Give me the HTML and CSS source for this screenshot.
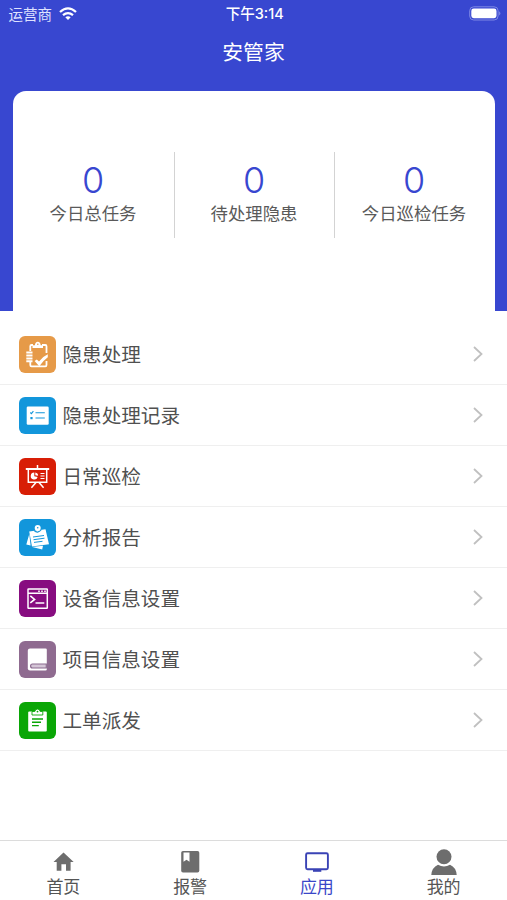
FILE: index.html
```html
<!DOCTYPE html>
<html lang="zh-CN">
<head>
<meta charset="utf-8">
<title>安管家</title>
<link rel="stylesheet" href="styles.css">
</head>
<body>
<div class="app">
  <header class="hero">
    <div class="status">
      <div class="carrier"><span>运营商</span>
        <svg class="wifi" width="18" height="13" viewBox="0 0 18 13" fill="none" stroke="#fff" stroke-width="2.3"><path d="M1 5Q9-2.200 17 5M4 8.200q5-4.200 10 0"/><path d="M6.300 10.300q2.700-2 5.400 0L9 13z" fill="#fff" stroke="none"/></svg>
      </div>
      <div class="time">下午3:14</div>
      <svg class="battery" width="32" height="15" viewBox="0 0 32 15"><rect x=".7" y=".8" width="28.4" height="13.2" rx="4" fill="none" stroke="#7e88e4" stroke-width="1"/><rect x="2.300" y="2.600" width="25.200" height="9.600" rx="2.400" fill="#fff"/><path d="M30.300 5.200q2 2.200 0 4.400z" fill="#929aeb"/></svg>
    </div>
    <h1 class="title">安管家</h1>
    <section class="card">
      <div class="stat"><b>0</b><span>今日总任务</span></div>
      <div class="stat"><b>0</b><span>待处理隐患</span></div>
      <div class="stat"><b>0</b><span>今日巡检任务</span></div>
    </section>
  </header>
  <main class="list">
    <a class="row">
      <svg class="icon orange" viewBox="0 0 37 37" fill="none" stroke="#fff" stroke-width="1.800"><path d="M14 9h-1.500q-1.200 0-1.200 1.300V15M11.300 26v3q0 1.300 1.200 1.300h13.800q1.200 0 1.200-1.300v-4M27.500 17v-6.700q0-1.300-1.200-1.300H23"/><path d="M13.500 12V9.300h2.400q.3-3.600 2.900-3.600t2.900 3.600h2.300V12z" fill="#fff" stroke="none"/><circle cx="18.800" cy="8.300" r=".8" fill="#e69a48" stroke="none"/><path d="M7.300 16.500h6.200M7.300 19.500h6.200M7.300 22.500h6.200M7.300 25.200h6.200" stroke-width="2"/><path d="M15.600 25l2.200-1.600 2.200 2.100q3.500-5 8.800-7.300v3.100q-5 3.700-8.500 8.900z" fill="#fff" stroke="none"/></svg>
      <span class="label">隐患处理</span><svg class="chevron" viewBox="0 0 10 16"><path d="M1 1l7.500 7L1 15"/></svg>
    </a>
    <a class="row">
      <svg class="icon blue" viewBox="0 0 37 37" fill="none" stroke="#1296db" stroke-width="1.100"><rect x="7.700" y="9.500" width="22" height="18.300" rx="1.300" fill="#fff" stroke="none"/><path d="M16.500 15.700h9.300M16.500 21h9.300M11.300 15.500l1.100 1.100 2-2.400"/><rect x="11.400" y="20" width="2.200" height="2.200" fill="#1296db" stroke="none"/></svg>
      <span class="label">隐患处理记录</span><svg class="chevron" viewBox="0 0 10 16"><path d="M1 1l7.500 7L1 15"/></svg>
    </a>
    <a class="row">
      <svg class="icon red" viewBox="0 0 37 37" fill="none" stroke="#fff" stroke-width="1.500"><path d="M6.800 11h23.400" stroke-width="2.200"/><path d="M18.500 7v4M9.300 12v12.200h18.400V12"/><path d="M17 24.500l-4.600 5.300M20 24.500l4.600 5.300"/><path d="M15.300 14.500a3.500 3.500 0 1 0 3.300 4.400l-3.300-.6z" fill="#fff" stroke="none"/><path d="M16.300 14.400a3.400 3.400 0 0 1 2.800 3.300l-2.800-.4z" fill="#fff" stroke="none"/><path d="M21.500 15.500h4M21.500 18h4M21.500 20.500h4" stroke-width="1.200"/></svg>
      <span class="label">日常巡检</span><svg class="chevron" viewBox="0 0 10 16"><path d="M1 1l7.500 7L1 15"/></svg>
    </a>
    <a class="row">
      <svg class="icon blue" viewBox="0 0 37 37" fill="none" stroke="#1296db"><path d="M10.300 15L7.300 25.500l4.300 1zM13.200 28l10.800-1.200-.8 3.800z" fill="#fff" stroke="none"/><path d="M10.200 12.500L26.500 10.300 30 25.200l-17 2.200z" fill="#fff" stroke="none"/><path d="M14 18l11-1.500M14.500 20.700l11-1.500M15 23.400l8.500-1.100"/><path d="M15.200 11.500q3.500 3.600 7-.8" stroke-width="1.200"/><circle cx="18.700" cy="8.900" r="3" fill="#fff" stroke="none"/><circle cx="18.700" cy="8.700" r=".8" fill="#1296db" stroke="none"/></svg>
      <span class="label">分析报告</span><svg class="chevron" viewBox="0 0 10 16"><path d="M1 1l7.500 7L1 15"/></svg>
    </a>
    <a class="row">
      <svg class="icon purple" viewBox="0 0 37 37" fill="none" stroke="#fff" stroke-width="1.500"><rect x="9" y="9" width="19.300" height="19.200" rx=".5"/><path d="M9 13.300h19.300"/><path d="M19.200 11.200h1.600M22.200 11.200h1.600M25.200 11.200h1.600" stroke-width="1.500"/><path d="M11.300 15.900l4.300 3.500-4.300 3.500M16.500 23h8.800" stroke-width="1.600"/></svg>
      <span class="label">设备信息设置</span><svg class="chevron" viewBox="0 0 10 16"><path d="M1 1l7.500 7L1 15"/></svg>
    </a>
    <a class="row">
      <svg class="icon mauve" viewBox="0 0 37 37"><path d="M11 7.500h15.500q1.300 0 1.300 1.300v19.400q0 1.300-1.300 1.300H11q-2.200 0-2.200-2.200V9.700q0-2.200 2.200-2.200z" fill="#fff"/><path d="M27.300 23H13.500q-1.900 0-1.900 2t1.900 2h13.800z" fill="#d4c5d6" stroke="#8a6a8e" stroke-width="1.200"/></svg>
      <span class="label">项目信息设置</span><svg class="chevron" viewBox="0 0 10 16"><path d="M1 1l7.500 7L1 15"/></svg>
    </a>
    <a class="row">
      <svg class="icon green" viewBox="0 0 37 37" fill="#fff"><rect x="9.200" y="9.600" width="18.600" height="20" rx="1"/><path d="M13 9.500V13h10.800V9.500h-2.600q-.4-2.500-2.700-2.500t-2.700 2.500z" stroke="#0aa606" stroke-width=".9"/><circle cx="18.500" cy="9.600" r=".9" fill="#0aa606"/><path d="M13 17h11M13 20.300h9M13 23.600h6.800" stroke="#0aa606" stroke-width="1.400"/></svg>
      <span class="label">工单派发</span><svg class="chevron" viewBox="0 0 10 16"><path d="M1 1l7.500 7L1 15"/></svg>
    </a>
  </main>
  <nav class="tabs">
    <a class="tab"><svg width="28" height="28" viewBox="0 0 28 28"><path d="M14.500 4.500L24.700 14h-3.100v8.800H17v-6.500h-4.600v6.500H7.700V14H4.500z" fill="#6d6d6d"/></svg><span>首页</span></a>
    <a class="tab"><svg width="28" height="28" viewBox="0 0 28 28"><path d="M7 3h14.500q1.800 0 1.800 1.800v18q0 1.800-1.800 1.800H7q-1.800 0-1.800-1.800v-18Q5.200 3 7 3z" fill="#6d6d6d"/><path d="M7.500 4.600h6v9.200l-3-2-3 2z" fill="#fff"/></svg><span>报警</span></a>
    <a class="tab active"><svg width="28" height="28" viewBox="0 0 28 28"><rect x="3.100" y="5.300" width="21.800" height="15.900" rx="1.500" fill="none" stroke="#3a43b5" stroke-width="1.900"/><path d="M10 21h8.300v2.800H10z" fill="#3a43b5"/></svg><span>应用</span></a>
    <a class="tab"><svg width="28" height="28" viewBox="0 0 28 28" fill="#6d6d6d"><circle cx="14" cy="8.700" r="7.500"/><path d="M1.300 27q.5-7.600 6.700-10.300 6 3.600 12 0 6.200 2.700 6.700 10.300z"/></svg><span>我的</span></a>
  </nav>
</div>
</body>
</html>
```

FILE: styles.css
```css
* { box-sizing: border-box; }
body {
  margin: 0;
  background: #fff;
  color: #505050;
  font-family: "Noto Sans CJK SC", sans-serif;
}
.app {
  display: flex;
  flex-direction: column;
  width: 507px;
  height: 900px;
  overflow: hidden;
}
.hero {
  display: flex;
  flex-direction: column;
  height: 311px;
  padding: 0 12px 0 13px;
  background: #3847d0;
  color: #fff;
}
.status {
  display: grid;
  grid-template-columns: 1fr auto 1fr;
  align-items: center;
  height: 26px;
  margin: 0 -6px 0 -4.5px;
  font-size: 14.5px;
  line-height: 26px;
}
.carrier { display: flex; align-items: center; gap: 7px; color: #dfe2ff; }
.time {
  padding-top: 1px;
  font-family: Inter, "Noto Sans CJK SC", sans-serif;
  font-weight: 500;
}
.battery { justify-self: end; }
.title {
  margin: 0;
  height: 65px;
  font-size: 20.8px;
  font-weight: 400;
  line-height: 50px;
  text-align: center;
  text-indent: -1px;
}
.card {
  display: flex;
  flex: 1;
  padding-top: 61px;
  border-radius: 13px 13px 0 0;
  background: #fff;
  color: #5a5a5a;
}
.stat {
  display: flex;
  flex: 0 0 161px;
  flex-direction: column;
  align-items: center;
  height: 86px;
  padding: 8px 1px 0 0;
}
.stat + .stat { flex-basis: 160px; border-left: 1px solid #d3d3d3; }
.stat b {
  height: 40px;
  color: #3847d0;
  font-family: Inter, sans-serif;
  font-size: 36px;
  font-weight: 360;
  line-height: 40px;
}
.stat span { font-size: 17.4px; line-height: 26px; }
.list { flex: 1; padding-top: 13px; }
.row {
  display: flex;
  align-items: center;
  height: 61px;
  padding: 0 24px 0 19px;
  border-bottom: 1px solid #efefef;
}
.icon { width: 37px; height: 37px; border-radius: 6px; }
.orange { background: #e69a48; }
.blue { background: #1296db; }
.red { background: #d81e06; }
.purple { background: #870d80; }
.mauve { background: #8f6b90; }
.green { background: #0aa606; }
.label { flex: 1; margin-left: 6.5px; font-size: 19.6px; line-height: 30px; }
.chevron { width: 10px; height: 16px; fill: none; stroke: #c0c0c0; stroke-width: 1.8; }
.tabs { display: flex; height: 60px; border-top: 1px solid #dcdcdc; }
.tab {
  display: flex;
  flex: 1;
  flex-direction: column;
  align-items: center;
  padding-top: 7px;
  color: #555;
  font-size: 17px;
  line-height: 20px;
}
.tab svg { flex: none; }
.tab.active { color: #3a47c8; }
```
